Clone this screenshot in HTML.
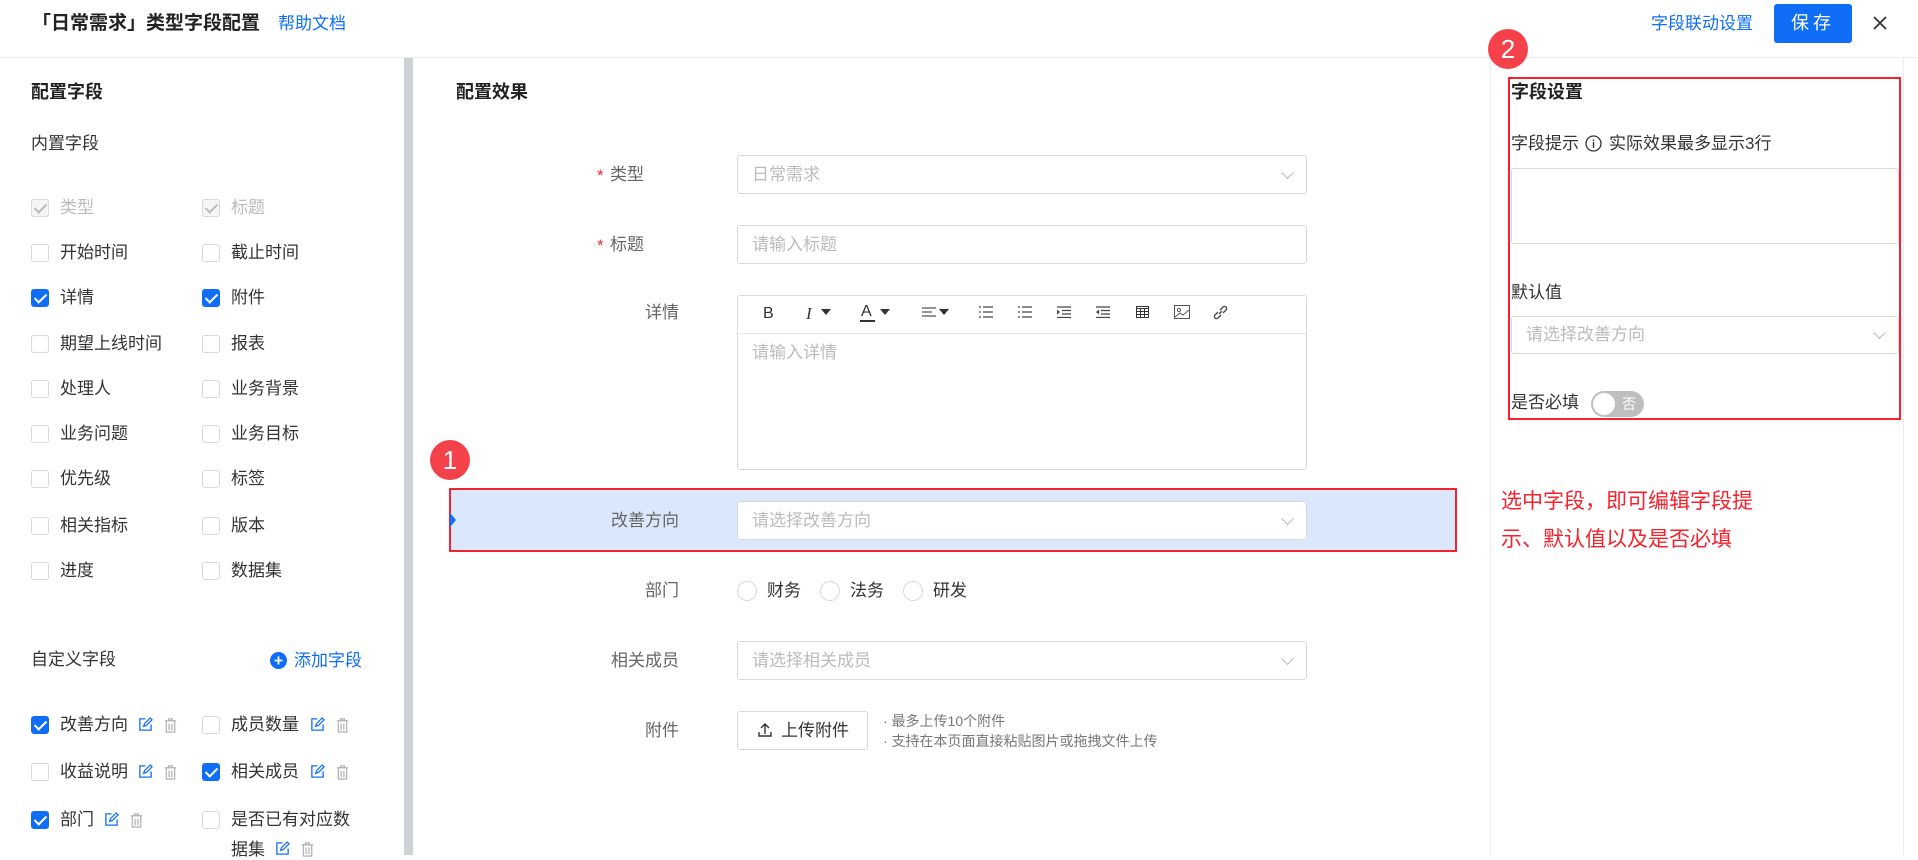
<!DOCTYPE html>
<html><head><meta charset="utf-8"><style>
*{box-sizing:border-box;margin:0;padding:0}
body{width:1918px;height:855px;overflow:hidden;background:#fff;font-family:"Liberation Sans","Noto Sans CJK SC",sans-serif;color:#333;font-size:17px;line-height:1.15;position:relative}
.a{position:absolute;white-space:nowrap}
.cb{position:absolute;width:18px;height:18px;border:1px solid #d9d9d9;border-radius:3px;background:#fff}
.cb.on{background:#0f6ef5;border-color:#0f6ef5}
.cb.on::after{content:"";position:absolute;left:5px;top:1px;width:5px;height:10px;border:solid #fff;border-width:0 2px 2px 0;transform:rotate(45deg)}
.cb.dis{background:#f5f5f5;border-color:#d9d9d9}
.cb.dis::after{content:"";position:absolute;left:5px;top:1px;width:5px;height:10px;border:solid #bbb;border-width:0 2px 2px 0;transform:rotate(45deg)}
.inp{position:absolute;border:1px solid #d9d9d9;border-radius:3px;background:#fff;color:#bbb;font-size:17px;padding-left:14px;display:flex;align-items:center}
.chev{position:absolute;right:14px;top:50%;width:9px;height:9px;border:solid #bbb;border-width:0 1.5px 1.5px 0;transform:translateY(-75%) rotate(45deg)}
.lbl{position:absolute;color:#666;text-align:right;width:120px}
.radio{position:absolute;width:20px;height:20px;border:1px solid #d9d9d9;border-radius:50%}
.ic{position:absolute}
</style></head><body>
<!-- header -->
<div class="a" style="left:32px;top:13px;font-size:19px;font-weight:bold;color:#222">「日常需求」类型字段配置</div>
<div class="a" style="left:278px;top:14px;font-size:17px;color:#0f6ef5">帮助文档</div>
<div class="a" style="left:1651px;top:14px;font-size:17px;color:#0f6ef5">字段联动设置</div>
<div class="a" style="left:1774px;top:4px;width:78px;height:39px;background:#0f6ef5;border-radius:3px;color:#fff;font-size:18px;text-align:center;line-height:39px;letter-spacing:4px">保存</div>
<svg class="ic" style="left:1872px;top:15px" width="16" height="16"><path d="M2 2L14 14M14 2L2 14" stroke="#333" stroke-width="1.8"/></svg>
<div class="a" style="left:0;top:57px;width:1918px;height:1px;background:#ececec"></div>
<!-- left panel -->
<div class="a" style="left:404px;top:58px;width:9px;height:797px;background:#cfd2d5"></div>
<div class="a" style="left:31px;top:82px;font-size:18px;font-weight:bold;color:#222">配置字段</div>
<div class="a" style="left:31px;top:134px">内置字段</div>
<div class="cb dis" style="left:31px;top:199px"></div><div class="a" style="left:60px;top:198px;color:#bbb">类型</div>
<div class="cb dis" style="left:202px;top:199px"></div><div class="a" style="left:231px;top:198px;color:#bbb">标题</div>
<div class="cb" style="left:31px;top:244px"></div><div class="a" style="left:60px;top:243px">开始时间</div>
<div class="cb" style="left:202px;top:244px"></div><div class="a" style="left:231px;top:243px">截止时间</div>
<div class="cb on" style="left:31px;top:289px"></div><div class="a" style="left:60px;top:288px">详情</div>
<div class="cb on" style="left:202px;top:289px"></div><div class="a" style="left:231px;top:288px">附件</div>
<div class="cb" style="left:31px;top:335px"></div><div class="a" style="left:60px;top:334px">期望上线时间</div>
<div class="cb" style="left:202px;top:335px"></div><div class="a" style="left:231px;top:334px">报表</div>
<div class="cb" style="left:31px;top:380px"></div><div class="a" style="left:60px;top:379px">处理人</div>
<div class="cb" style="left:202px;top:380px"></div><div class="a" style="left:231px;top:379px">业务背景</div>
<div class="cb" style="left:31px;top:425px"></div><div class="a" style="left:60px;top:424px">业务问题</div>
<div class="cb" style="left:202px;top:425px"></div><div class="a" style="left:231px;top:424px">业务目标</div>
<div class="cb" style="left:31px;top:470px"></div><div class="a" style="left:60px;top:469px">优先级</div>
<div class="cb" style="left:202px;top:470px"></div><div class="a" style="left:231px;top:469px">标签</div>
<div class="cb" style="left:31px;top:517px"></div><div class="a" style="left:60px;top:516px">相关指标</div>
<div class="cb" style="left:202px;top:517px"></div><div class="a" style="left:231px;top:516px">版本</div>
<div class="cb" style="left:31px;top:562px"></div><div class="a" style="left:60px;top:561px">进度</div>
<div class="cb" style="left:202px;top:562px"></div><div class="a" style="left:231px;top:561px">数据集</div>
<div class="a" style="left:31px;top:650px">自定义字段</div>
<svg class="ic" style="left:270px;top:652px" width="17" height="17"><circle cx="8.5" cy="8.5" r="8.5" fill="#0f6ef5"/><path d="M8.5 4.5v8M4.5 8.5h8" stroke="#fff" stroke-width="1.8"/></svg>
<div class="a" style="left:294px;top:651px;color:#0f6ef5">添加字段</div>
<svg width="0" height="0" style="position:absolute"><defs>
<symbol id="ed" viewBox="0 0 16 16"><path d="M8 2H2v12h12V8" fill="none" stroke="#0f6ef5" stroke-width="1.4"/><path d="M6 10l1-3 6-6 2 2-6 6z" fill="none" stroke="#0f6ef5" stroke-width="1.3"/></symbol>
<symbol id="tr" viewBox="0 0 16 16"><path d="M2 3h12M6 3V1h4v2M3.5 3v12h9V3M6.5 6v7M9.5 6v7" fill="none" stroke="#aaa" stroke-width="1.2"/></symbol>
</defs></svg>
<div class="cb on" style="left:31px;top:716px"></div><div class="a" style="left:60px;top:715px">改善方向</div>
<svg class="ic" style="left:138px;top:717px" width="15" height="15"><use href="#ed"/></svg><svg class="ic" style="left:163px;top:718px" width="15" height="15"><use href="#tr"/></svg>
<div class="cb" style="left:202px;top:716px"></div><div class="a" style="left:231px;top:715px">成员数量</div>
<svg class="ic" style="left:310px;top:717px" width="15" height="15"><use href="#ed"/></svg><svg class="ic" style="left:335px;top:718px" width="15" height="15"><use href="#tr"/></svg>
<div class="cb" style="left:31px;top:763px"></div><div class="a" style="left:60px;top:762px">收益说明</div>
<svg class="ic" style="left:138px;top:764px" width="15" height="15"><use href="#ed"/></svg><svg class="ic" style="left:163px;top:765px" width="15" height="15"><use href="#tr"/></svg>
<div class="cb on" style="left:202px;top:763px"></div><div class="a" style="left:231px;top:762px">相关成员</div>
<svg class="ic" style="left:310px;top:764px" width="15" height="15"><use href="#ed"/></svg><svg class="ic" style="left:335px;top:765px" width="15" height="15"><use href="#tr"/></svg>
<div class="cb on" style="left:31px;top:811px"></div><div class="a" style="left:60px;top:810px">部门</div>
<svg class="ic" style="left:104px;top:812px" width="15" height="15"><use href="#ed"/></svg><svg class="ic" style="left:129px;top:813px" width="15" height="15"><use href="#tr"/></svg>
<div class="cb" style="left:202px;top:811px"></div><div class="a" style="left:231px;top:810px">是否已有对应数</div>
<div class="a" style="left:231px;top:840px">据集</div>
<svg class="ic" style="left:275px;top:841px" width="15" height="15"><use href="#ed"/></svg><svg class="ic" style="left:300px;top:842px" width="15" height="15"><use href="#tr"/></svg>
<!-- middle -->
<div class="a" style="left:456px;top:82px;font-size:18px;font-weight:bold;color:#222">配置效果</div>
<div class="a" style="left:597px;top:166px;color:#f5222d">*</div><div class="lbl" style="left:524px;top:165px;width:120px">类型</div>
<div class="inp" style="left:737px;top:155px;width:570px;height:39px">日常需求<span class="chev"></span></div>
<div class="a" style="left:597px;top:236px;color:#f5222d">*</div><div class="lbl" style="left:524px;top:235px">标题</div>
<div class="inp" style="left:737px;top:225px;width:570px;height:39px">请输入标题</div>
<div class="lbl" style="left:559px;top:303px">详情</div>
<div class="a" style="left:737px;top:295px;width:570px;height:175px;border:1px solid #d9d9d9;border-radius:3px"></div>
<div class="a" style="left:738px;top:333px;width:568px;height:1px;background:#e5e5e5"></div>
<div class="a" style="left:752px;top:343px;color:#bbb">请输入详情</div>
<div class="a" style="left:763px;top:305px;font-size:16px;color:#333">B</div>
<div class="a" style="left:806px;top:304px;font-size:17px;font-style:italic;font-family:'Liberation Serif',serif">I</div>
<svg class="ic" style="left:821px;top:309px" width="10" height="6"><path d="M0 0h10L5 6z" fill="#333"/></svg>
<div class="a" style="left:861px;top:303px;font-size:16px">A</div><div class="a" style="left:860px;top:320px;width:15px;height:2px;background:#333"></div>
<svg class="ic" style="left:880px;top:309px" width="10" height="6"><path d="M0 0h10L5 6z" fill="#333"/></svg>
<svg class="ic" style="left:922px;top:307px" width="14" height="11"><path d="M0 1h14M0 5h10M0 9h14" stroke="#555" stroke-width="1.3"/></svg>
<svg class="ic" style="left:939px;top:309px" width="10" height="6"><path d="M0 0h10L5 6z" fill="#333"/></svg>
<svg class="ic" style="left:979px;top:306px" width="14" height="12"><path d="M0 1h2M0 6h2M0 11h2M4 1h10M4 6h10M4 11h10" stroke="#444" stroke-width="1.3"/></svg>
<svg class="ic" style="left:1018px;top:306px" width="14" height="12"><path d="M0 1h2M0 6h2M0 11h2M4 1h10M4 6h10M4 11h10" stroke="#444" stroke-width="1.3"/></svg>
<svg class="ic" style="left:1057px;top:306px" width="14" height="12"><path d="M0 1h14M5 4.5h9M5 8h9M0 11.5h14" stroke="#444" stroke-width="1.3"/><path d="M0 3.5l3 2.5-3 2.5z" fill="#444"/></svg>
<svg class="ic" style="left:1096px;top:306px" width="14" height="12"><path d="M0 1h14M5 4.5h9M5 8h9M0 11.5h14" stroke="#444" stroke-width="1.3"/><path d="M3 3.5l-3 2.5 3 2.5z" fill="#444"/></svg>
<svg class="ic" style="left:1136px;top:306px" width="13" height="12"><rect x=".5" y=".5" width="12" height="11" fill="none" stroke="#333"/><path d="M0 2.5h13M0 5.5h13M0 8.5h13M4.5 2v10M8.5 2v10" stroke="#333"/></svg>
<svg class="ic" style="left:1174px;top:305px" width="16" height="14"><rect x=".5" y=".5" width="15" height="13" fill="none" stroke="#555"/><circle cx="5" cy="5" r="1.6" fill="none" stroke="#555"/><path d="M1 12l5-4 3 2 6-5" fill="none" stroke="#555"/></svg>
<svg class="ic" style="left:1213px;top:305px" width="15" height="15"><path d="M6 9l3-3M5 7l-3 3a2 2 0 0 0 3 3l3-3M10 8l3-3a2 2 0 0 0-3-3L7 5" fill="none" stroke="#444" stroke-width="1.3"/></svg>
<!-- selected row -->
<div class="a" style="left:449px;top:488px;width:1008px;height:64px;background:#dbe8fb;border:2px solid #f5222d"></div>
<svg class="ic" style="left:450px;top:513px" width="8" height="14"><path d="M0 0l6 7-6 7z" fill="#0f6ef5"/></svg>
<div class="lbl" style="left:559px;top:511px">改善方向</div>
<div class="inp" style="left:737px;top:501px;width:570px;height:39px">请选择改善方向<span class="chev"></span></div>
<div class="a" style="left:430px;top:440px;width:40px;height:40px;border-radius:50%;background:#f5424a;color:#fff;font-size:26px;text-align:center;line-height:40px">1</div>
<div class="lbl" style="left:559px;top:581px">部门</div>
<div class="radio" style="left:737px;top:581px"></div><div class="a" style="left:767px;top:581px">财务</div>
<div class="radio" style="left:820px;top:581px"></div><div class="a" style="left:850px;top:581px">法务</div>
<div class="radio" style="left:903px;top:581px"></div><div class="a" style="left:933px;top:581px">研发</div>
<div class="lbl" style="left:559px;top:651px">相关成员</div>
<div class="inp" style="left:737px;top:641px;width:570px;height:39px">请选择相关成员<span class="chev"></span></div>
<div class="lbl" style="left:559px;top:721px">附件</div>
<div class="a" style="left:737px;top:711px;width:131px;height:39px;border:1px solid #d9d9d9;border-radius:3px"></div>
<svg class="ic" style="left:758px;top:723px" width="14" height="14"><path d="M7 11V1M3 5l4-4 4 4M1 9v4h12V9" fill="none" stroke="#333" stroke-width="1.4"/></svg>
<div class="a" style="left:781px;top:721px;color:#333">上传附件</div>
<div class="a" style="left:883px;top:713px;font-size:14px;color:#777">· 最多上传10个附件</div>
<div class="a" style="left:883px;top:733px;font-size:14px;color:#777">· 支持在本页面直接粘贴图片或拖拽文件上传</div>
<div class="a" style="left:1501px;top:490px;font-size:21px;color:#f5222d">选中字段，即可编辑字段提</div>
<div class="a" style="left:1501px;top:528px;font-size:21px;color:#f5222d">示、默认值以及是否必填</div>
<!-- right -->
<div class="a" style="left:1490px;top:58px;width:1px;height:797px;background:#ececec"></div>
<div class="a" style="left:1903px;top:58px;width:1px;height:797px;background:#ececec"></div>
<div class="a" style="left:1488px;top:29px;width:40px;height:40px;border-radius:50%;background:#f5424a;color:#fff;font-size:26px;text-align:center;line-height:40px">2</div>
<div class="a" style="left:1508px;top:77px;width:393px;height:343px;border:2px solid #f5222d"></div>
<div class="a" style="left:1511px;top:82px;font-size:18px;font-weight:bold;color:#222">字段设置</div>
<div class="a" style="left:1511px;top:134px">字段提示</div>
<svg class="ic" style="left:1585px;top:135px" width="17" height="17"><circle cx="8.5" cy="8.5" r="7.5" fill="none" stroke="#333" stroke-width="1.3"/><path d="M8.5 7v6M8.5 4.5v1.5" stroke="#333" stroke-width="1.4"/></svg>
<div class="a" style="left:1609px;top:134px">实际效果最多显示3行</div>
<div class="a" style="left:1511px;top:168px;width:388px;height:76px;border:1px solid #d9d9d9;border-radius:3px"></div>
<div class="a" style="left:1511px;top:283px">默认值</div>
<div class="inp" style="left:1511px;top:316px;width:388px;height:38px">请选择改善方向<span class="chev"></span></div>
<div class="a" style="left:1511px;top:393px">是否必填</div>
<div class="a" style="left:1591px;top:391px;width:53px;height:26px;border-radius:13px;background:#bfbfbf"></div>
<div class="a" style="left:1593px;top:393px;width:22px;height:22px;border-radius:50%;background:#fff"></div>
<div class="a" style="left:1622px;top:396px;font-size:14px;color:#fff">否</div>
</body></html>
